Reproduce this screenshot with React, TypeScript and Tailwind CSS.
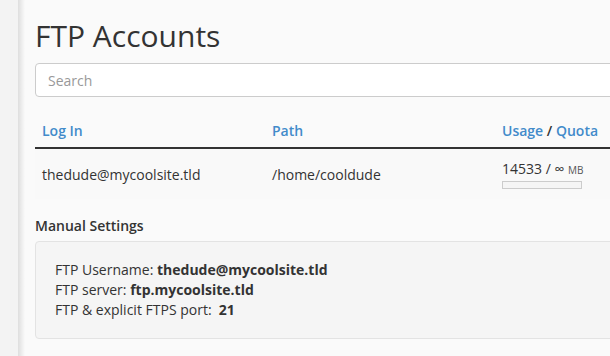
import React from "react";

const font = { fontFamily: '"Open Sans", "Liberation Sans", sans-serif' };

const App: React.FC = () => {
  return (
    <div
      className="flex h-[356px] w-[610px] overflow-hidden bg-[#fafafa] text-[14px] text-[#333]"
      style={font}
    >
      {/* sidebar strip */}
      <div className="w-[18px] shrink-0 bg-[#f3f3f3]" />
      <div className="w-[7px] shrink-0 bg-gradient-to-r from-[#dedede] to-[#fafafa]" />

      <div className="w-[700px] shrink-0 pl-[10px]">
        <h1 className="mt-[19px] text-[30px] leading-[34px] font-normal">FTP Accounts</h1>

        <input
          type="text"
          placeholder="Search"
          className="mt-[10px] h-[34px] w-full rounded-[4px] border border-[#ccc] bg-white px-[12px] text-[14px] placeholder:text-[#999] outline-none"
        />

        {/* table */}
        <div className="mt-[17px]">
          <div className="grid h-[35px] grid-cols-[230px_230px_1fr] items-center border-b-2 border-[#333] font-semibold">
            <div className="px-[7px] text-[#428bca]">Log In</div>
            <div className="px-[7px] text-[#428bca]">Path</div>
            <div className="px-[7px]">
              <span className="text-[#428bca]">Usage</span> / <span className="text-[#428bca]">Quota</span>
            </div>
          </div>
          <div className="grid h-[50px] grid-cols-[230px_230px_1fr] items-center bg-[#f9f9f9]">
            <div className="px-[7px]">thedude@mycoolsite.tld</div>
            <div className="px-[7px]">/home/cooldude</div>
            <div className="px-[7px]">
              <div className="leading-[18px]">
                14533 / ∞ <span className="text-[10px] uppercase text-[#555]">MB</span>
              </div>
              <div className="mt-[2px] h-[8px] w-[80px] border border-[#ccc] bg-[#f5f5f5]" />
            </div>
          </div>
        </div>

        <div className="mt-[17px] font-semibold leading-[20px]">Manual Settings</div>

        <div className="mt-[5px] rounded-[4px] border border-[#e3e3e3] bg-[#f5f5f5] px-[19px] py-[18px] leading-[20px]">
          <div>
            FTP Username: <b className="font-bold">thedude@mycoolsite.tld</b>
          </div>
          <div>
            FTP server: <b className="font-bold">ftp.mycoolsite.tld</b>
          </div>
          <div>
            FTP &amp; explicit FTPS port:&nbsp; <b className="font-bold">21</b>
          </div>
        </div>
      </div>
    </div>
  );
};

export default App;
